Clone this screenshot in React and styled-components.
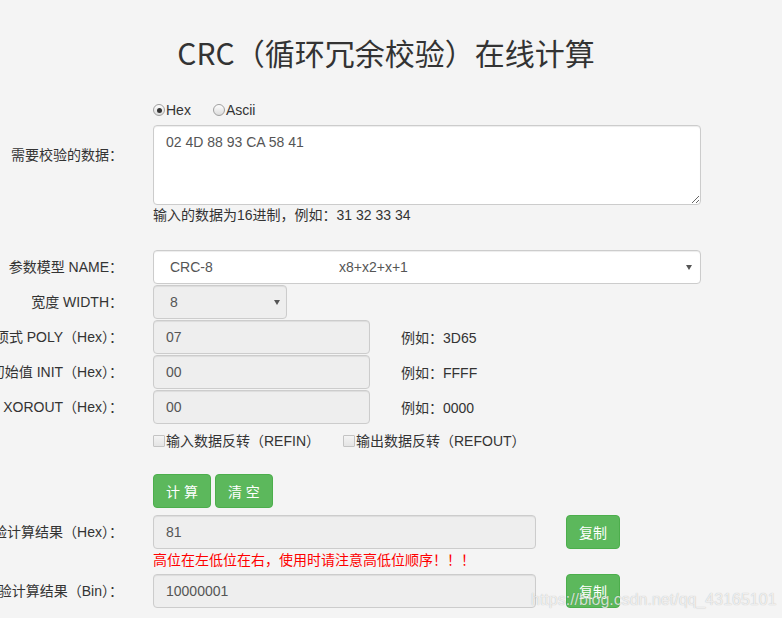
import styled, { createGlobalStyle } from "styled-components";

const GlobalStyle = createGlobalStyle`
  html, body {
    margin: 0;
    padding: 0;
    background: #f4f4f4;
    overflow: hidden;
  }
  body {
    font-family: "Liberation Sans", "Noto Sans CJK SC", sans-serif;
    font-size: 14px;
    color: #333;
  }
`;

const Page = styled.div`
  position: relative;
  width: 782px;
  height: 618px;
  overflow: hidden;
`;

const Title = styled.h1`
  margin: 20px 0 0;
  padding-right: 10px;
  font-family: "Noto Sans CJK SC", "Liberation Sans", sans-serif;
  font-weight: 400;
  font-size: 30px;
  line-height: 64px;
  text-align: center;
  color: #333;
`;

const Row = styled.div`
  display: flex;
  align-items: ${(p) => (p.$top ? "flex-start" : "center")};
  gap: 30px;
  margin-top: ${(p) => p.$mt || 0}px;
`;

// labels are right aligned; long ones run off the left edge of the page
const Label = styled.div`
  flex: none;
  width: 123px;
  min-width: 0;
  display: flex;
  justify-content: flex-end;
  padding-top: ${(p) => p.$pt || 0}px;
  white-space: nowrap;
  line-height: 20px;
`;

const Indented = styled.div`
  display: flex;
  align-items: center;
  padding-left: 153px;
  margin-top: ${(p) => p.$mt || 0}px;
  height: ${(p) => p.$h || 20}px;
  gap: ${(p) => p.$gap || 0}px;
`;

const Choice = styled.label`
  display: flex;
  align-items: center;
  gap: 1px;
  line-height: 20px;
  white-space: nowrap;
  margin-right: ${(p) => p.$mr || 0}px;
`;

const RadioDot = styled.span`
  position: relative;
  box-sizing: border-box;
  width: 12px;
  height: 12px;
  border-radius: 50%;
  border: 1px solid #a0a0a0;
  background: linear-gradient(#fdfdfd, #dcdcdc);

  &::after {
    content: "";
    display: ${(p) => (p.$on ? "block" : "none")};
    position: absolute;
    left: 2.5px;
    top: 2.5px;
    width: 5px;
    height: 5px;
    border-radius: 50%;
    background: #333;
  }
`;

const CheckBox = styled.span`
  box-sizing: border-box;
  width: 12px;
  height: 12px;
  border: 1px solid #c4c4c4;
  border-radius: 1px;
  background: linear-gradient(#f4f4f4, #e4e4e4);
`;

const TextArea = styled.textarea`
  box-sizing: border-box;
  width: 548px;
  height: 80px;
  padding: 6px 12px;
  border: 1px solid #ccc;
  border-radius: 4px;
  background: #fff;
  box-shadow: inset 0 1px 1px rgba(0, 0, 0, 0.075);
  font-family: "Liberation Sans", "Noto Sans CJK SC", sans-serif;
  font-size: 14px;
  line-height: 20px;
  color: #555;
  outline: none;
  resize: vertical;
`;

const Help = styled.div`
  padding-left: 153px;
  line-height: 20px;
  color: #333;
`;

const Warn = styled(Help)`
  color: #f00;
  margin-top: 1px;
`;

const SelectBox = styled.div`
  position: relative;
  box-sizing: border-box;
  display: flex;
  align-items: center;
  width: ${(p) => p.$w}px;
  height: 34px;
  padding-left: 16px;
  border: 1px solid #ccc;
  border-radius: 4px;
  background: ${(p) => (p.$gray ? "#eee" : "#fff")};
  box-shadow: inset 0 1px 1px rgba(0, 0, 0, 0.075);
  color: #555;
  white-space: nowrap;
`;

const ModelName = styled.span`
  display: inline-block;
  width: 169px;
`;

const Arrow = styled.span`
  position: absolute;
  right: ${(p) => p.$r}px;
  top: 14px;
  width: 0;
  height: 0;
  border-left: 3px solid transparent;
  border-right: 3px solid transparent;
  border-top: 5px solid #555;
`;

const Input = styled.input`
  box-sizing: border-box;
  width: ${(p) => p.$w}px;
  height: 34px;
  padding: 0 12px;
  border: 1px solid #ccc;
  border-radius: 4px;
  background: #eee;
  box-shadow: inset 0 1px 1px rgba(0, 0, 0, 0.075);
  font-family: "Liberation Sans", "Noto Sans CJK SC", sans-serif;
  font-size: 14px;
  color: #555;
  outline: none;
`;

const Example = styled.span`
  margin-left: 1px;
  white-space: nowrap;
`;

const Button = styled.button`
  box-sizing: border-box;
  height: 34px;
  padding: 0 12px;
  border: 1px solid #4cae4c;
  border-radius: 4px;
  background: #5cb85c;
  color: #fff;
  font-family: "Liberation Sans", "Noto Sans CJK SC", sans-serif;
  font-size: 14px;
  white-space: pre;
  cursor: pointer;
`;

const Watermark = styled.div`
  position: absolute;
  left: 531px;
  top: 590px;
  font-family: "Liberation Sans", sans-serif;
  font-size: 16px;
  line-height: 20px;
  color: rgba(255, 255, 255, 0.75);
  text-shadow: 0 0 1px rgba(0, 0, 0, 0.28);
  white-space: nowrap;
  pointer-events: none;
`;

const params = [
  { label: "生成多项式 POLY（Hex）：", value: "07", example: "3D65" },
  { label: "初始值 INIT（Hex）：", value: "00", example: "FFFF" },
  { label: "结果异或值 XOROUT（Hex）：", value: "00", example: "0000" },
];

export default function App() {
  return (
    <Page>
      <GlobalStyle />
      <Title>CRC（循环冗余校验）在线计算</Title>

      <Indented $mt={16}>
        <Choice $mr={22}>
          <RadioDot $on />
          Hex
        </Choice>
        <Choice>
          <RadioDot />
          Ascii
        </Choice>
      </Indented>

      <Row $top $mt={5}>
        <Label $pt={20}>需要校验的数据：</Label>
        <TextArea readOnly defaultValue="02 4D 88 93 CA 58 41" />
      </Row>
      <Help>输入的数据为16进制，例如：31 32 33 34</Help>

      <Row $mt={25}>
        <Label>参数模型 NAME：</Label>
        <SelectBox $w={548}>
          <ModelName>CRC-8</ModelName>
          x8+x2+x+1
          <Arrow $r={8} />
        </SelectBox>
      </Row>

      <Row $mt={1}>
        <Label>宽度 WIDTH：</Label>
        <SelectBox $w={134} $gray>
          8
          <Arrow $r={6} />
        </SelectBox>
      </Row>

      {params.map((p) => (
        <Row key={p.label} $mt={1}>
          <Label>{p.label}</Label>
          <Input $w={217} readOnly value={p.value} />
          <Example>例如：{p.example}</Example>
        </Row>
      ))}

      <Indented $mt={7}>
        <Choice $mr={23}>
          <CheckBox />
          输入数据反转（REFIN）
        </Choice>
        <Choice>
          <CheckBox />
          输出数据反转（REFOUT）
        </Choice>
      </Indented>

      <Indented $mt={23} $h={34} $gap={4}>
        <Button>计 算</Button>
        <Button>清 空</Button>
      </Indented>

      <Row $mt={7}>
        <Label>校验计算结果（Hex）：</Label>
        <Input $w={383} readOnly value="81" />
        <Button>复制</Button>
      </Row>
      <Warn>高位在左低位在右，使用时请注意高低位顺序！！！</Warn>

      <Row $mt={4}>
        <Label>校验计算结果（Bin）：</Label>
        <Input $w={383} readOnly value="10000001" />
        <Button>复制</Button>
      </Row>

      <Watermark>https://blog.csdn.net/qq_43165101</Watermark>
    </Page>
  );
}
